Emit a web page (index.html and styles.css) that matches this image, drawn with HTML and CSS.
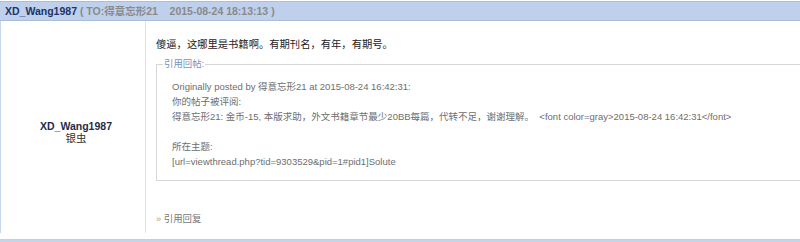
FILE: index.html
```html
<!DOCTYPE html>
<html lang="zh-CN">
<head>
    <meta charset="UTF-8">
    <title>引用回帖</title>
    <link rel="stylesheet" href="styles.css">
</head>
<body>
    <div class="wrap">
        <div class="post-head">
            <span class="author">XD_Wang1987</span>
            <span class="meta">( TO:得意忘形21&nbsp;&nbsp;&nbsp; 2015-08-24 18:13:13 )</span>
        </div>

        <div class="post">
            <div class="post-user">
                <div class="user-name">XD_Wang1987</div>
                <div class="user-rank">银虫</div>
            </div>

            <div class="post-body">
                <p class="message">傻逼，这哪里是书籍啊。有期刊名，有年，有期号。</p>

                <fieldset class="quote">
                    <legend>引用回帖:</legend>
                    <div class="quote-text">
                        Originally posted by 得意忘形21 at 2015-08-24 16:42:31:<br>
                        你的帖子被评阅:<br>
                        得意忘形21: 金币-15, 本版求助，外文书籍章节最少20BB每篇，代转不足，谢谢理解。&nbsp; &lt;font color=gray&gt;2015-08-24 16:42:31&lt;/font&gt;<br>
                        <br>
                        所在主题:<br>
                        [url=viewthread.php?tid=9303529&amp;pid=1#pid1]Solute
                    </div>
                </fieldset>

                <div class="reply-link"><span class="arrow">»</span> 引用回复</div>
            </div>
        </div>

        <!-- 下一楼的标题栏，只露出一条边 -->
        <div class="post-head next"></div>
    </div>
</body>
</html>
```

FILE: styles.css
```css
body {
    margin: 0;
    padding: 0;
    background-color: #fff;
    font-family: 'Liberation Sans', 'Noto Sans CJK SC', sans-serif;
    color: #333;
    overflow: hidden;
}

.wrap {
    width: 840px;
    padding-top: 1px;
}

.post-head {
    height: 18px;
    line-height: 18px;
    padding-left: 5px;
    background-color: #bed0ec;
    border-top: 1px solid #a9bedb;
    border-bottom: 1px solid #a9bedb;
    font-size: 10.5px;
    font-weight: bold;
    white-space: nowrap;
}

.post-head .author {
    color: #1c3466;
}

.post-head .meta {
    color: #8a8a8a;
}

.post-head.next {
    margin-top: 6px;
    border-bottom: none;
    background-color: #c5d4e8;
    border-top-color: #c0d0e6;
}

.post {
    display: grid;
    grid-template-columns: 145px 1fr;
    border-left: 1px solid #c8d6ea;
    height: 212px;
}

.post-user {
    display: flex;
    flex-direction: column;
    justify-content: center;
    align-items: center;
    border-right: 1px solid #e2e2e2;
    padding: 10px 0 0 6px;
    font-size: 10.5px;
    line-height: 12px;
}

.user-name {
    font-weight: bold;
    color: #1e2c4a;
}

.user-rank {
    color: #333;
}

.post-body {
    padding: 15px 0 0 10px;
}

.message {
    margin: 0 0 3px 0;
    font-size: 10.3px;
    line-height: 18px;
    color: #222;
}

.quote {
    margin: 0;
    padding: 8px 15px 11px 15px;
    border: 1px solid #d6d6d6;
}

.quote legend {
    margin-left: -9px;
    padding: 0 1px;
    font-size: 9.4px;
    line-height: 14px;
    color: #7393bd;
}

.quote-text {
    font-size: 9.5px;
    line-height: 15px;
    color: #6e6e6e;
    white-space: nowrap;
}

.reply-link {
    margin-top: 30px;
    font-size: 9.4px;
    line-height: 15px;
    color: #777;
}

.reply-link .arrow {
    color: #c2a35a;
}
```
